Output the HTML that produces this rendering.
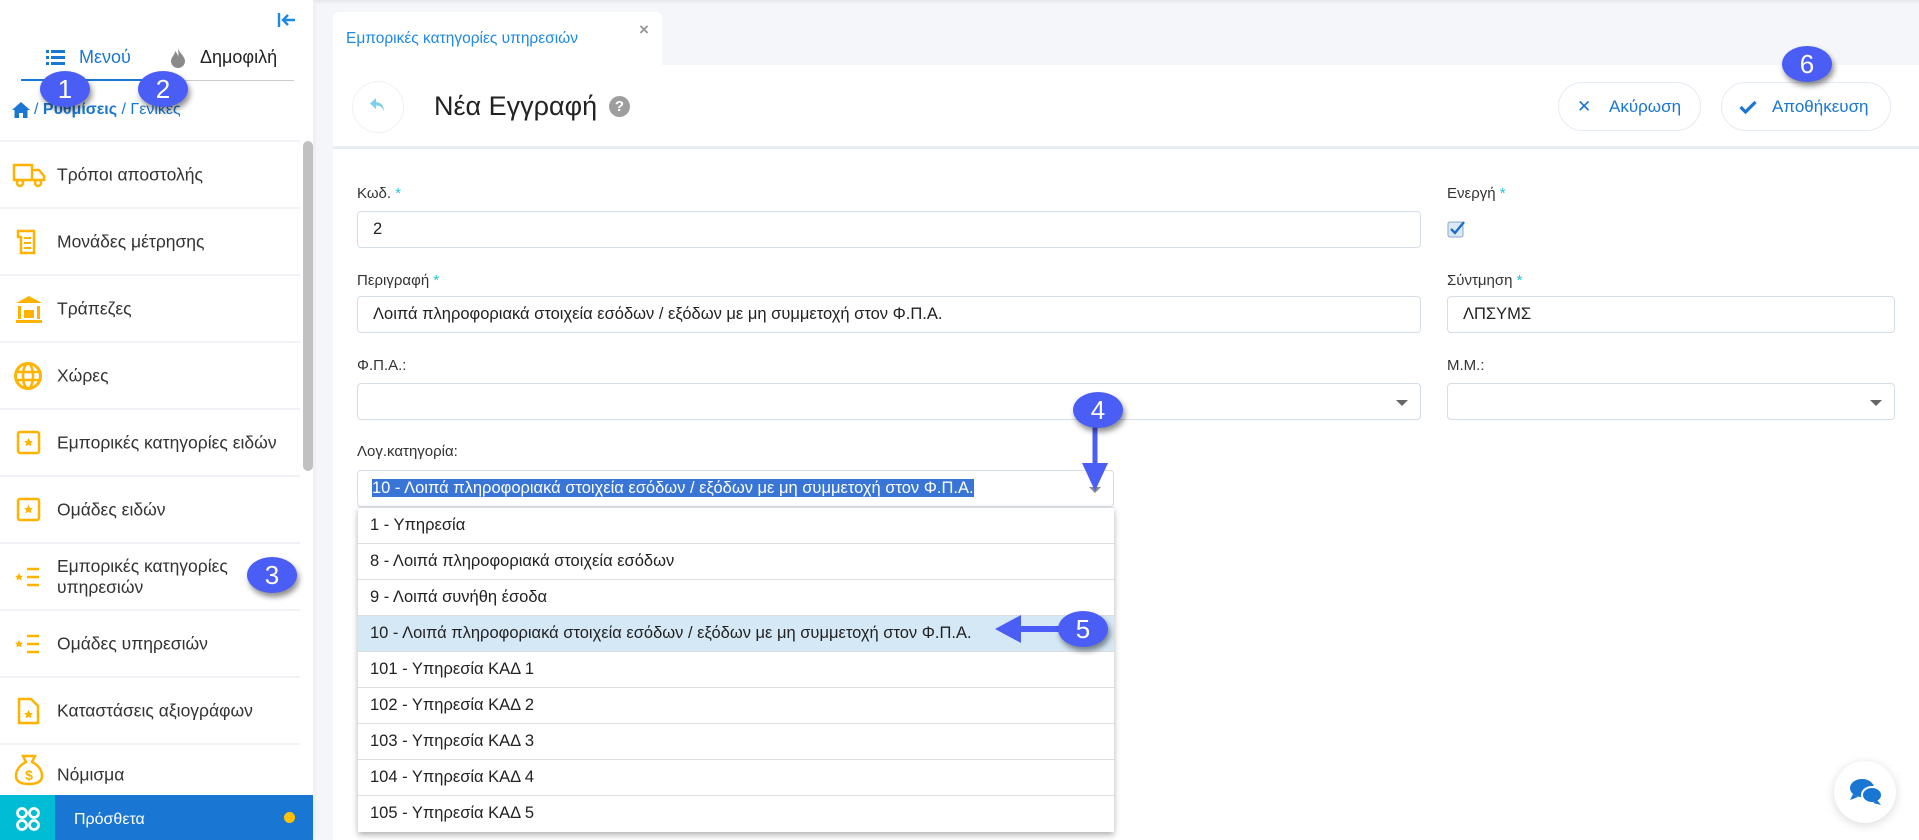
<!DOCTYPE html>
<html><head><meta charset="utf-8">
<style>
*{box-sizing:border-box;margin:0;padding:0}
body{width:1919px;height:840px;overflow:hidden;background:#f5f6fa;font-family:"Liberation Sans","DejaVu Sans",sans-serif;color:#222;position:relative}
.abs{position:absolute}
#side{left:0;top:0;width:313px;height:840px;background:#fff;box-shadow:1px 0 4px rgba(0,0,0,.06)}
.item{position:absolute;left:0;width:300px;height:67px;border-top:2px solid #f1f2f7}
.item .t{position:absolute;left:57px;top:50%;transform:translateY(-50%);font-size:17.5px;color:#333;line-height:21px}
.item svg{position:absolute;left:12px;top:50%;transform:translateY(-50%)}
.lbl{position:absolute;font-size:15px;color:#333}
.lbl b{color:#26c6da;font-weight:normal}
.inp{position:absolute;border:1px solid #d5dde8;border-radius:4px;background:#fff;height:37px;font-size:16.5px;color:#222;padding:8px 15px}
.caret{position:absolute;right:12px;top:16px;width:0;height:0;border-left:6px solid transparent;border-right:6px solid transparent;border-top:6px solid #666}
.badge{position:absolute;width:50px;height:36px;border-radius:50%;background:#4a5ef5;color:#fff;font-size:26px;text-align:center;line-height:36px;box-shadow:2px 4px 6px rgba(0,0,0,.45);z-index:10}
.row{height:36px;border-bottom:1px solid #ddd;padding-left:12px;font-size:16.5px;line-height:35px;color:#222;white-space:nowrap}
.btn{position:absolute;top:82px;height:49px;border:1px solid #e4ebf5;border-radius:25px;background:#fff;color:#1976d2;font-size:17px;line-height:47px}
</style></head><body>

<div id="side" class="abs">
  <svg class="abs" style="left:277px;top:12px" width="20" height="16" viewBox="0 0 20 16"><path d="M2 1v14" stroke="#1e88e5" stroke-width="2.4"/><path d="M18 8H6M11 3L6 8l5 5" stroke="#1e88e5" stroke-width="2.4" fill="none"/></svg>
  <svg class="abs" style="left:46px;top:50px" width="19" height="15" viewBox="0 0 19 15"><g fill="#1976d2"><rect x="0" y="0" width="3" height="3"/><rect x="5" y="0" width="14" height="3"/><rect x="0" y="6" width="3" height="3"/><rect x="5" y="6" width="14" height="3"/><rect x="0" y="12" width="3" height="3"/><rect x="5" y="12" width="14" height="3"/></g></svg>
  <div class="abs" style="left:79px;top:47px;font-size:18px;color:#1976d2">Μενού</div>
  <svg class="abs" style="left:170px;top:48px" width="16" height="20" viewBox="0 0 16 20"><path d="M8 0C9 5 15 8 15 13a7 7 0 0 1-14 0C1 9 5 7 5 3c2 2 3 4 3 6 1-3 0-6 0-9z" fill="#8a8a8a"/></svg>
  <div class="abs" style="left:200px;top:47px;font-size:18px;color:#222">Δημοφιλή</div>
  <div class="abs" style="left:21px;top:80px;width:273px;height:1px;background:#ccc"></div>
  <div class="abs" style="left:21px;top:79px;width:137px;height:2px;background:#1976d2"></div>
  <svg class="abs" style="left:12px;top:102px" width="18" height="16" viewBox="0 0 18 16"><path d="M9 0L0 8h2.5v8h4.5v-5h4v5h4.5V8H18z" fill="#1976d2"/></svg>
  <div class="abs" style="left:34px;top:101px;font-size:16px;color:#1976d2">/ <b>Ρυθμίσεις</b> / Γενικές</div>

  <div class="item" style="top:140px"><svg width="34" height="26" viewBox="0 0 34 26"><path d="M2 3h18v15H2zM20 8h7l5 6v4H20z" fill="none" stroke="#ffb300" stroke-width="2.5"/><circle cx="8" cy="21" r="3" fill="#fff" stroke="#ffb300" stroke-width="2.5"/><circle cx="26" cy="21" r="3" fill="#fff" stroke="#ffb300" stroke-width="2.5"/></svg><div class="t">Τρόποι αποστολής</div></div>
  <div class="item" style="top:207px"><svg width="34" height="26" viewBox="0 0 34 26"><path d="M6 2h16v22H9V8H6z" fill="none" stroke="#ffb300" stroke-width="2.5"/><path d="M12 9h7M12 14h7M12 19h7" stroke="#ffb300" stroke-width="2"/></svg><div class="t">Μονάδες μέτρησης</div></div>
  <div class="item" style="top:274px"><svg width="34" height="28" viewBox="0 0 34 28"><path d="M17 1L4 8h26z" fill="#ffb300"/><rect x="4" y="25" width="26" height="3" fill="#ffb300"/><rect x="6" y="11" width="3" height="13" fill="#ffb300"/><rect x="25" y="11" width="3" height="13" fill="#ffb300"/><rect x="12" y="15" width="10" height="8" fill="#ffb300"/></svg><div class="t">Τράπεζες</div></div>
  <div class="item" style="top:341px"><svg width="34" height="30" viewBox="0 0 34 30"><circle cx="16" cy="15" r="12.5" fill="none" stroke="#ffb300" stroke-width="3"/><ellipse cx="16" cy="15" rx="5" ry="12.5" fill="none" stroke="#ffb300" stroke-width="2.5"/><path d="M4 11h24M4 19h24" stroke="#ffb300" stroke-width="2.5"/></svg><div class="t">Χώρες</div></div>
  <div class="item" style="top:408px"><svg width="34" height="26" viewBox="0 0 34 26"><rect x="6" y="2" width="21" height="21" rx="2" fill="none" stroke="#ffb300" stroke-width="2.5"/><path d="M16.5 8l1.5 3 3 .3-2.3 2 .7 3-2.9-1.6-2.9 1.6.7-3-2.3-2 3-.3z" fill="#ffb300"/></svg><div class="t">Εμπορικές κατηγορίες ειδών</div></div>
  <div class="item" style="top:475px"><svg width="34" height="26" viewBox="0 0 34 26"><rect x="6" y="2" width="21" height="21" rx="2" fill="none" stroke="#ffb300" stroke-width="2.5"/><path d="M16.5 8l1.5 3 3 .3-2.3 2 .7 3-2.9-1.6-2.9 1.6.7-3-2.3-2 3-.3z" fill="#ffb300"/></svg><div class="t">Ομάδες ειδών</div></div>
  <div class="item" style="top:542px"><svg width="34" height="26" viewBox="0 0 34 26"><path d="M7 9l1.3 2.6 2.7.3-2 1.8.6 2.7-2.6-1.4-2.6 1.4.6-2.7-2-1.8 2.7-.3z" fill="#ffb300"/><path d="M15 5h12M15 13h12M15 21h12" stroke="#ffb300" stroke-width="2.5"/></svg><div class="t">Εμπορικές κατηγορίες<br>υπηρεσιών</div></div>
  <div class="item" style="top:609px"><svg width="34" height="26" viewBox="0 0 34 26"><path d="M7 9l1.3 2.6 2.7.3-2 1.8.6 2.7-2.6-1.4-2.6 1.4.6-2.7-2-1.8 2.7-.3z" fill="#ffb300"/><path d="M15 5h12M15 13h12M15 21h12" stroke="#ffb300" stroke-width="2.5"/></svg><div class="t">Ομάδες υπηρεσιών</div></div>
  <div class="item" style="top:676px"><svg width="34" height="28" viewBox="0 0 34 28"><path d="M7 2h12l7 7v17H7z" fill="none" stroke="#ffb300" stroke-width="2.5"/><path d="M16.5 13l1.5 3 3 .3-2.3 2 .7 3-2.9-1.6-2.9 1.6.7-3-2.3-2 3-.3z" fill="#ffb300"/></svg><div class="t">Καταστάσεις αξιογράφων</div></div>
  <div class="item" style="top:743px;height:52px"><svg width="34" height="32" viewBox="0 0 34 32"><path d="M11 2h12l-3 6c6 3 10 8 10 14 0 5-4 8-13 8S4 27 4 22c0-6 4-11 10-14z" fill="none" stroke="#ffb300" stroke-width="2.5"/><text x="17" y="26" font-size="14" font-weight="bold" fill="#ffb300" text-anchor="middle" font-family="Liberation Sans">$</text></svg><div class="t" style="top:30px">Νόμισμα</div></div>
  <div class="abs" style="left:303px;top:141px;width:10px;height:330px;background:#c1c1c1;border-radius:5px"></div>
  <div class="abs" style="left:0;top:795px;width:313px;height:45px;background:#1976d2"></div>
  <div class="abs" style="left:0;top:795px;width:55px;height:45px;background:#00bcd4"></div>
  <svg class="abs" style="left:15px;top:806px" width="26" height="26" viewBox="0 0 26 26"><g fill="none" stroke="#fff" stroke-width="2.8"><circle cx="7" cy="7" r="4.5"/><circle cx="19" cy="7" r="4.5"/><circle cx="7" cy="19" r="4.5"/><circle cx="19" cy="19" r="4.5"/></g></svg>
  <div class="abs" style="left:74px;top:811px;font-size:16px;color:#fff">Πρόσθετα</div>
  <div class="abs" style="left:284px;top:812px;width:11px;height:11px;border-radius:50%;background:#ffc107"></div>
</div>

<div class="abs" style="left:313px;top:0;width:1606px;height:5px;background:linear-gradient(#e6e8ee,#f5f6fa)"></div>
<div class="abs" style="left:333px;top:12px;width:329px;height:56px;background:#fff;border-radius:6px 6px 0 0"></div>
<div class="abs" style="left:346px;top:30px;font-size:15.5px;color:#1e88e5">Εμπορικές κατηγορίες υπηρεσιών</div>
<div class="abs" style="left:639px;top:20px;font-size:17px;color:#999;font-weight:bold">×</div>

<div class="abs" style="left:333px;top:65px;width:1586px;height:775px;background:#fff"></div>
<div class="abs" style="left:333px;top:146px;width:1586px;height:3px;background:#e9ecf3"></div>
<div class="abs" style="left:352px;top:81px;width:52px;height:52px;border-radius:50%;border:1px solid #eef1f6;background:#fff"></div>
<svg class="abs" style="left:370px;top:98px" width="16" height="15" viewBox="0 0 16 15"><path d="M6 0L0 5.5 6 11V7.5c4 0 6.5 1.5 8 6 0-6-3-9-8-9.5z" fill="#7fd0ea"/></svg>
<div class="abs" style="left:434px;top:91px;font-size:27px;color:#222">Νέα Εγγραφή</div>
<div class="abs" style="left:609px;top:96px;width:21px;height:21px;border-radius:50%;background:#9e9e9e;color:#fff;font-size:15px;font-weight:bold;text-align:center;line-height:21px">?</div>

<div class="btn" style="left:1558px;width:143px"><span style="position:absolute;left:18px;font-weight:bold;font-size:17px">✕</span><span style="position:absolute;left:50px">Ακύρωση</span></div>
<div class="btn" style="left:1721px;width:170px"><svg style="position:absolute;left:17px;top:17px" width="18" height="14" viewBox="0 0 18 14"><path d="M1.5 7l5 5L16.5 2" stroke="#1976d2" stroke-width="3.2" fill="none"/></svg><span style="position:absolute;left:50px">Αποθήκευση</span></div>

<div class="lbl" style="left:357px;top:185px">Κωδ. <b>*</b></div>
<div class="inp" style="left:357px;top:211px;width:1064px">2</div>
<div class="lbl" style="left:357px;top:272px">Περιγραφή <b>*</b></div>
<div class="inp" style="left:357px;top:296px;width:1064px">Λοιπά πληροφοριακά στοιχεία εσόδων / εξόδων με μη συμμετοχή στον Φ.Π.Α.</div>
<div class="lbl" style="left:357px;top:357px">Φ.Π.Α.:</div>
<div class="inp" style="left:357px;top:383px;width:1064px"><div class="caret"></div></div>
<div class="lbl" style="left:357px;top:443px">Λογ.κατηγορία:</div>
<div class="inp" style="left:357px;top:470px;width:757px;padding-left:14px;white-space:nowrap"><span style="background:#3875d7;color:#fff">10 - Λοιπά πληροφοριακά στοιχεία εσόδων / εξόδων με μη συμμετοχή στον Φ.Π.Α.</span><div class="caret" style="border-top-color:#888"></div></div>

<div class="lbl" style="left:1447px;top:185px">Ενεργή <b>*</b></div>
<svg class="abs" style="left:1447px;top:220px" width="18" height="18" viewBox="0 0 18 18"><rect x="1" y="2" width="15" height="15" rx="2" fill="#dde8f5" stroke="#86a8d0"/><path d="M4 9l4 4 9-11" stroke="#1e6ec8" stroke-width="2.4" fill="none"/></svg>
<div class="lbl" style="left:1447px;top:272px">Σύντμηση <b>*</b></div>
<div class="inp" style="left:1447px;top:296px;width:448px">ΛΠΣΥΜΣ</div>
<div class="lbl" style="left:1447px;top:357px">Μ.Μ.:</div>
<div class="inp" style="left:1447px;top:383px;width:448px"><div class="caret"></div></div>

<div class="abs" style="left:358px;top:507px;width:756px;background:#fff;box-shadow:0 3px 6px rgba(0,0,0,.3);border-top:1px solid #ddd">
 <div class="row">1 - Υπηρεσία</div>
 <div class="row">8 - Λοιπά πληροφοριακά στοιχεία εσόδων</div>
 <div class="row">9 - Λοιπά συνήθη έσοδα</div>
 <div class="row" style="background:#d5e8f5">10 - Λοιπά πληροφοριακά στοιχεία εσόδων / εξόδων με μη συμμετοχή στον Φ.Π.Α.</div>
 <div class="row">101 - Υπηρεσία ΚΑΔ 1</div>
 <div class="row">102 - Υπηρεσία ΚΑΔ 2</div>
 <div class="row">103 - Υπηρεσία ΚΑΔ 3</div>
 <div class="row">104 - Υπηρεσία ΚΑΔ 4</div>
 <div class="row" style="border-bottom:none">105 - Υπηρεσία ΚΑΔ 5</div>
</div>

<div class="abs" style="left:1834px;top:761px;width:62px;height:62px;border-radius:50%;background:#fff;box-shadow:0 2px 10px rgba(0,0,0,.15)"></div>
<svg class="abs" style="left:1849px;top:778px" width="34" height="28" viewBox="0 0 34 28"><ellipse cx="13" cy="10" rx="12" ry="9" fill="#1976d2"/><path d="M4 16l-3 6 8-3z" fill="#1976d2"/><ellipse cx="23" cy="17" rx="10" ry="8" fill="#1976d2" stroke="#fff" stroke-width="2"/><path d="M28 22l4 5-8-2z" fill="#1976d2"/></svg>

<div class="badge" style="left:40px;top:71px">1</div>
<div class="badge" style="left:138px;top:71px">2</div>
<div class="badge" style="left:247px;top:557px">3</div>
<div class="badge" style="left:1073px;top:392px">4</div>
<svg class="abs" style="left:1080px;top:425px;z-index:9" width="30" height="68" viewBox="0 0 30 68"><path d="M15 0v40" stroke="#4a5ef5" stroke-width="5"/><path d="M2 38h26L15 66z" fill="#4a5ef5"/></svg>
<div class="badge" style="left:1058px;top:611px">5</div>
<svg class="abs" style="left:993px;top:613px;z-index:9" width="72" height="32" viewBox="0 0 72 32"><path d="M25 16h47" stroke="#4a5ef5" stroke-width="6"/><path d="M28 2v28L2 16z" fill="#4a5ef5"/></svg>
<div class="badge" style="left:1782px;top:46px">6</div>
</body></html>
